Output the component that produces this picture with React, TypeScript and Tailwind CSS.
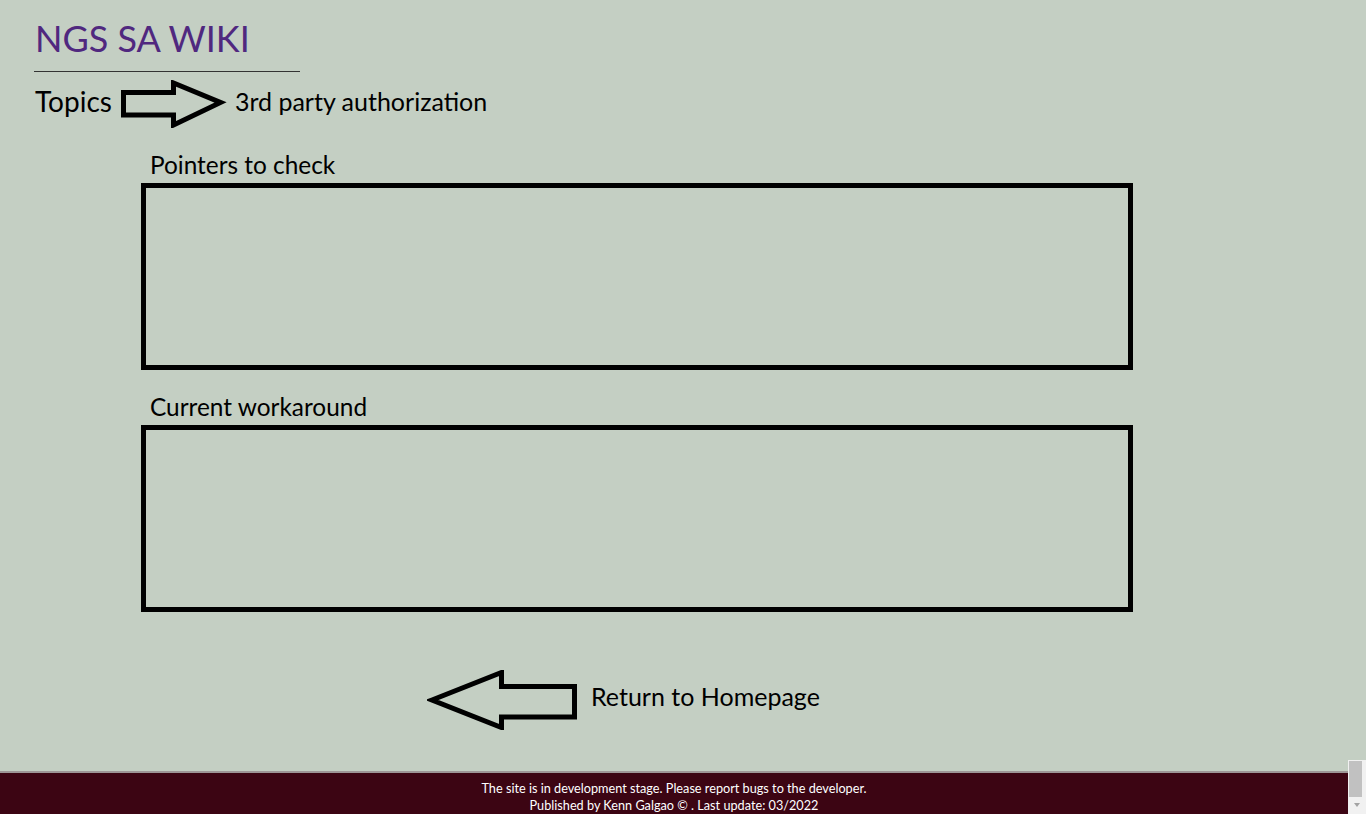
import React from 'react';

const font = { fontFamily: 'Lato, "Open Sans", sans-serif' };

const RightArrow = () => (
  <svg width="106" height="48" viewBox="0 0 106 48" className="shrink-0">
    <polygon
      points="2.5,12.5 52.5,12.5 52.5,3 99.5,22.5 52.5,45 52.5,35 2.5,35"
      fill="none"
      stroke="#000"
      strokeWidth="5"
    />
  </svg>
);

const LeftArrow = () => (
  <svg width="150" height="60" viewBox="0 0 150 60" className="shrink-0">
    <polygon
      points="5,30 74.5,2.5 74.5,16.5 147.5,16.5 147.5,47 74.5,47 74.5,57.5"
      fill="none"
      stroke="#000"
      strokeWidth="5"
    />
  </svg>
);

const Section = ({ title }: { title: string }) => (
  <div>
    <div className="pl-[9px] text-[24.4px] leading-[29px] text-black">{title}</div>
    <div className="mt-[4px] h-[187px] w-[992px] border-[5px] border-black" />
  </div>
);

export default function App() {
  return (
    <div className="min-h-[820px] bg-white flex flex-col" style={font}>
      {/* Page */}
      <div className="h-[760px] bg-[#c4cfc3] pl-[34px] pt-[17px]">
        <h1 className="pl-px text-[36px] leading-[43px] text-[#50287f]">NGS SA WIKI</h1>
        <div className="mt-[11px] h-px w-[266px] bg-[#333]" />

        <div className="mt-[8px] flex items-start">
          <span className="mt-[4px] pl-px text-[28px] leading-[34px] text-black">Topics</span>
          <div className="ml-[9px]">
            <RightArrow />
          </div>
          <span className="ml-[8px] mt-[6px] text-[25px] leading-[30px] text-black">
            3rd party authorization
          </span>
        </div>

        <div className="ml-[107px] mt-[22px] flex flex-col gap-[22px]">
          <Section title="Pointers to check" />
          <Section title="Current workaround" />
        </div>

        <div className="ml-[393px] mt-[58px] flex items-start">
          <LeftArrow />
          <span className="ml-[14px] mt-[11px] text-[25px] leading-[30px] text-black">
            Return to Homepage
          </span>
        </div>
      </div>

      {/* Footer + scrollbar */}
      <div className="flex h-[54px]">
        <div className="flex flex-1 flex-col">
          <div className="h-[11px] bg-[#c4cfc3]" />
          <div className="h-[2px] bg-[#9e9797]" />
          <footer className="flex-1 bg-[#3c0513] pt-[7px] text-center text-[12.7px] leading-[17px] text-white">
            <p>The site is in development stage. Please report bugs to the developer.</p>
            <p>Published by Kenn Galgao © . Last update: 03/2022</p>
          </footer>
        </div>
        <div className="flex w-[18px] flex-col items-center bg-[#f1f1f1]">
          <div className="mt-px h-[36px] w-[13px] self-start ml-[1px] bg-[#c1c1c1]" />
          <div className="mt-[6px] h-0 w-0 border-x-[3px] border-t-[4px] border-x-transparent border-t-[#a3a3a3]" />
        </div>
      </div>
    </div>
  );
}
